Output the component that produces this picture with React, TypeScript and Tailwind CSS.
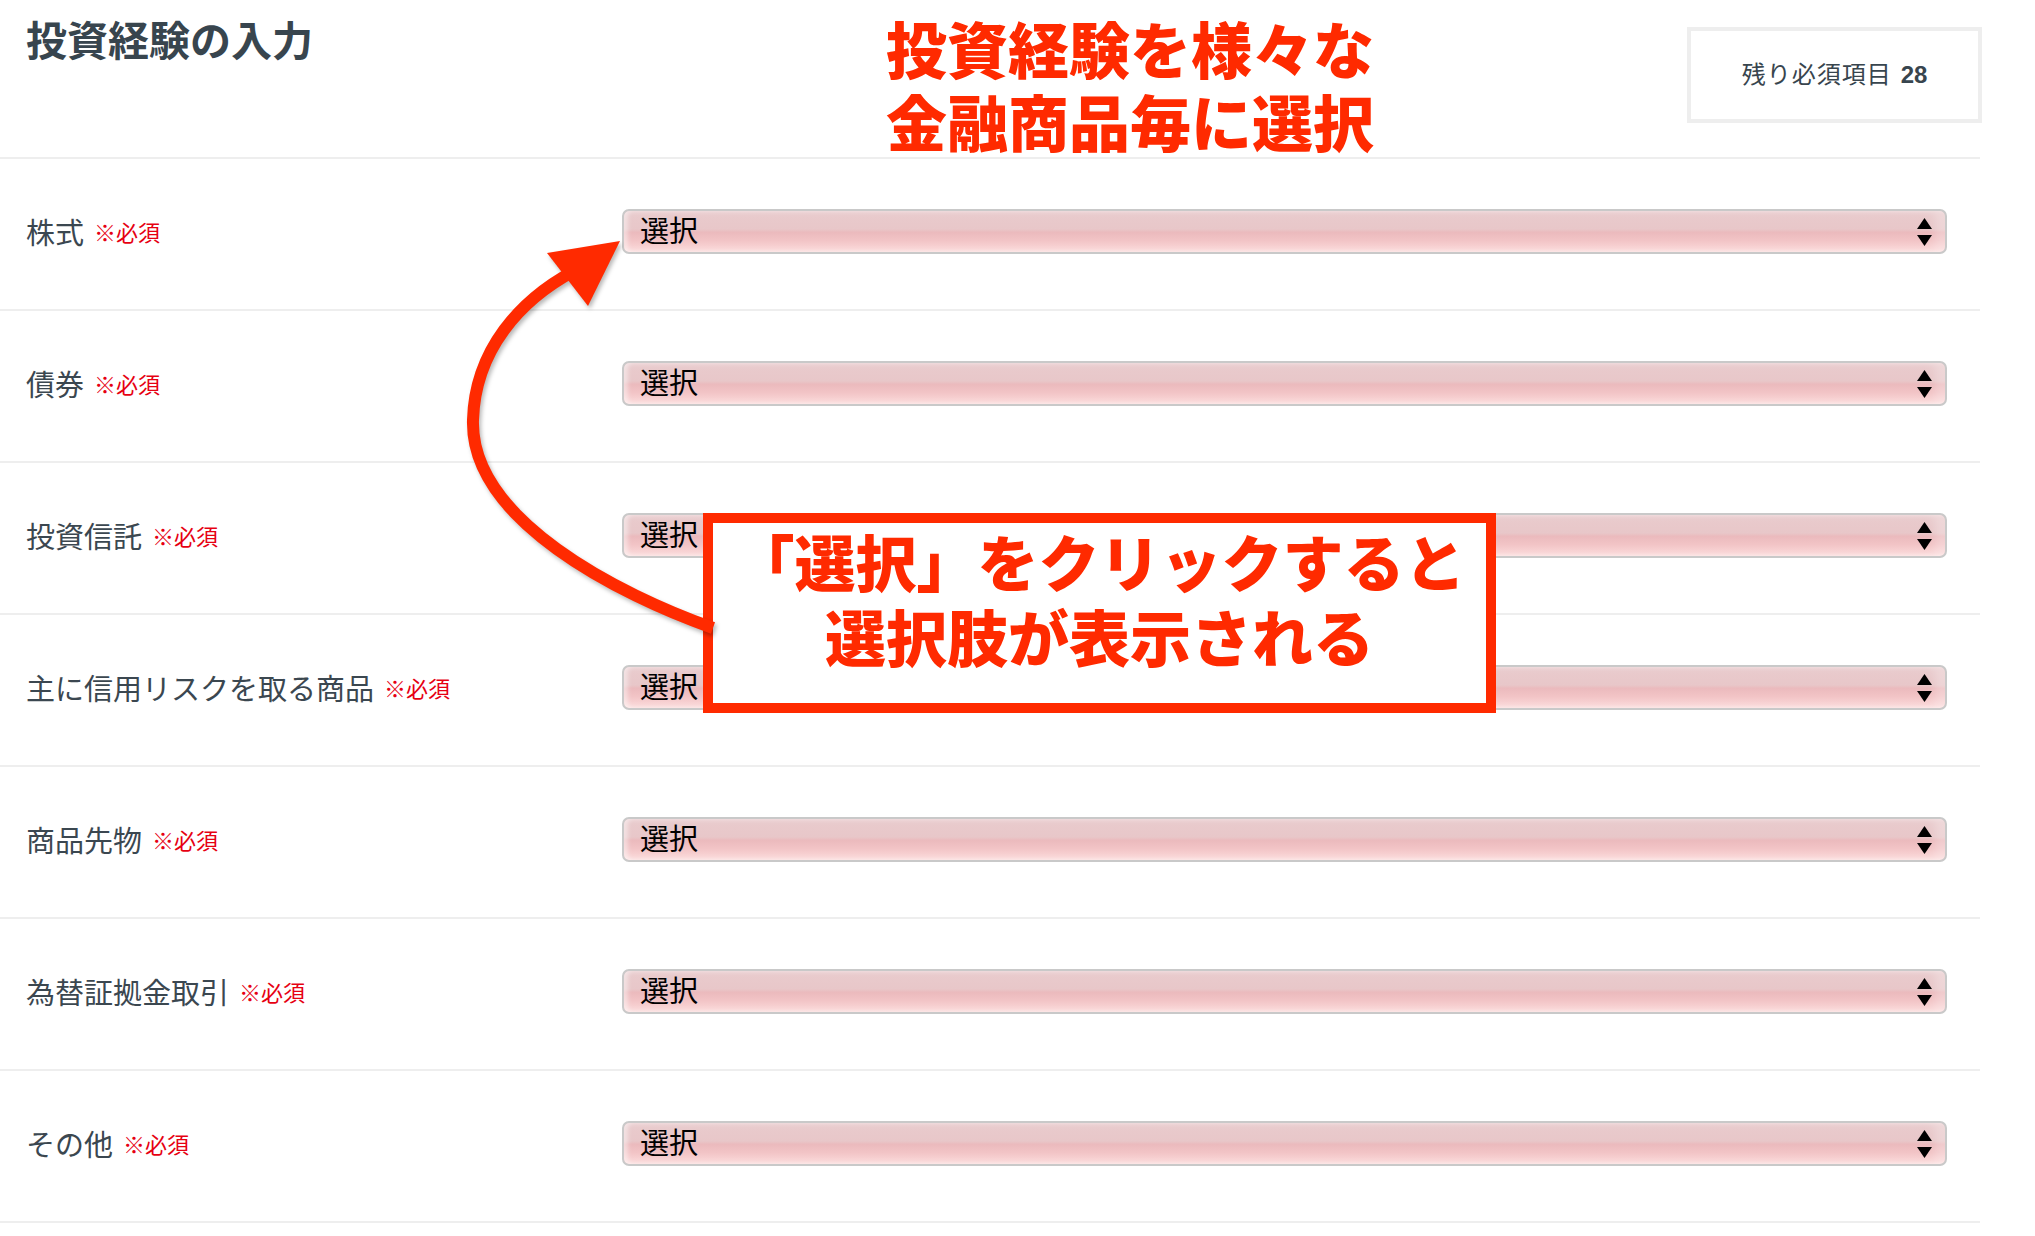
import React from "react";

// 投資経験の入力フォーム（注釈付きスクリーンショット）

const rows = [
  "株式",
  "債券",
  "投資信託",
  "主に信用リスクを取る商品",
  "商品先物",
  "為替証拠金取引",
  "その他",
];

const SelectBox = () => {
  return (
    <div className="relative mb-[5px] flex h-[45px] w-[1325px] items-center rounded-[7px] border-2 border-[#c9c9c9] bg-[linear-gradient(to_bottom,#e9cbcd_0%,#e8c7c9_44%,#ebbabd_52%,#f2c4c6_72%,#fcdcdc_100%)] pl-[16px] pr-[13px] shadow-[inset_4px_0_4px_rgba(255,255,255,0.45),inset_-10px_0_8px_rgba(255,255,255,0.25)]">
      <span className="flex-1 pt-[1px] text-[29px] leading-none text-black">選択</span>
      <svg width="15" height="28" viewBox="0 0 15 28">
        <polygon points="7.5,0 15,11 0,11" fill="#000" />
        <polygon points="0,17 15,17 7.5,28" fill="#000" />
      </svg>
    </div>
  );
};

const App = () => {
  return (
    <div className="relative min-h-[1236px] w-full bg-white font-['Liberation_Sans','Noto_Sans_CJK_JP',sans-serif]">
      <div className="w-[1980px]">
        {/* header */}
        <div className="flex h-[157px] items-start justify-between">
          <h1 className="pl-[26px] pt-[18px] text-[41px] font-bold leading-[48px] text-[#38454e]">
            投資経験の入力
          </h1>
          <div className="mr-[-2px] mt-[27px] flex h-[96px] w-[295px] items-center justify-center border-4 border-[#eeeeee] text-[24px] text-[#38454e]">
            <span className="tracking-[1px]">残り必須項目</span>
            <span className="ml-[9px] font-bold">28</span>
          </div>
        </div>

        {/* rows */}
        {rows.map((label, i) => (
          <div
            key={label}
            className={
              i === rows.length - 1
                ? "flex h-[154px] items-center border-y-2 border-[#eeeeee]"
                : "flex h-[152px] items-center border-t-2 border-[#eeeeee]"
            }
          >
            <div className="flex w-[622px] shrink-0 items-center pl-[26px]">
              <span className="text-[29px] leading-none text-[#3b4750]">{label}</span>
              <span className="ml-[10px] text-[22px] leading-none text-[#e60012]">
                <span className="font-bold">※</span>必須
              </span>
            </div>
            <SelectBox />
          </div>
        ))}
      </div>

      {/* annotation: title */}
      <div className="absolute left-[870px] top-[17px] w-[520px] text-center text-[61px] font-black leading-[73px] text-[#ff2a00]">
        投資経験を様々な
        <br />
        金融商品毎に選択
      </div>

      {/* annotation: callout box */}
      <div className="absolute left-[703px] top-[513px] h-[200px] w-[793px] border-[10px] border-[#ff2a00] bg-white pt-[6px] text-center text-[61px] font-black leading-[75px] text-[#ff2a00]">
        「選択」をクリックすると
        <br />
        選択肢が表示される
      </div>

      {/* annotation: arrow */}
      <svg
        className="pointer-events-none absolute left-0 top-0 drop-shadow-[2px_3px_2px_rgba(0,0,0,0.28)]"
        width="2035"
        height="1236"
        viewBox="0 0 2035 1236"
      >
        <path
          d="M 713 628 C 620 595, 470 520, 473 420 C 475 350, 520 300, 574 271"
          fill="none"
          stroke="#ff2a00"
          strokeWidth="12"
        />
        <polygon points="547,253 620,241 588,306" fill="#ff2a00" />
      </svg>
    </div>
  );
};

export default App;
